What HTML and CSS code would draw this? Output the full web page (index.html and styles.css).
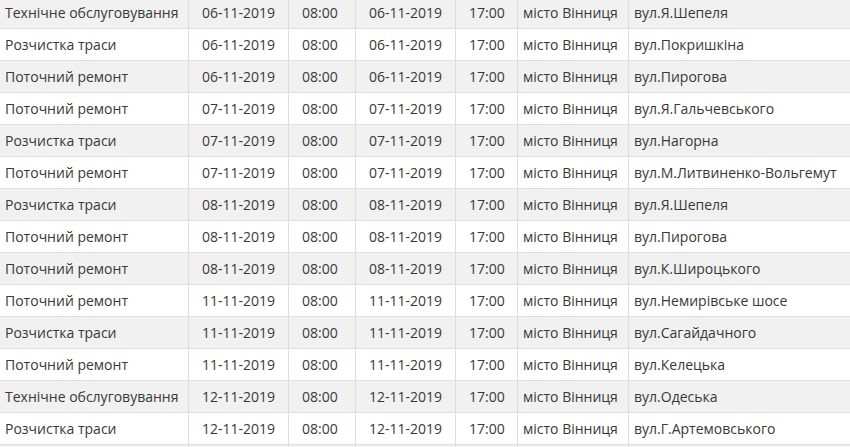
FILE: index.html
```html
<!DOCTYPE html>
<html lang="uk">
<head>
<meta charset="utf-8">
<title>Графік відключень</title>
<link rel="stylesheet" href="styles.css">
</head>
<body>
<div class="wrap">
<table class="schedule">
<colgroup>
<col class="c-type"><col class="c-date1"><col class="c-time1"><col class="c-date2"><col class="c-time2"><col class="c-city"><col class="c-street">
</colgroup>
<tbody>
<tr><td>Технічне обслуговування</td><td class="num">06-11-2019</td><td class="num">08:00</td><td class="num">06-11-2019</td><td class="num">17:00</td><td>місто Вінниця</td><td>вул.Я.Шепеля</td></tr>
<tr><td>Розчистка траси</td><td class="num">06-11-2019</td><td class="num">08:00</td><td class="num">06-11-2019</td><td class="num">17:00</td><td>місто Вінниця</td><td>вул.Покришкіна</td></tr>
<tr><td>Поточний ремонт</td><td class="num">06-11-2019</td><td class="num">08:00</td><td class="num">06-11-2019</td><td class="num">17:00</td><td>місто Вінниця</td><td>вул.Пирогова</td></tr>
<tr><td>Поточний ремонт</td><td class="num">07-11-2019</td><td class="num">08:00</td><td class="num">07-11-2019</td><td class="num">17:00</td><td>місто Вінниця</td><td>вул.Я.Гальчевського</td></tr>
<tr><td>Розчистка траси</td><td class="num">07-11-2019</td><td class="num">08:00</td><td class="num">07-11-2019</td><td class="num">17:00</td><td>місто Вінниця</td><td>вул.Нагорна</td></tr>
<tr><td>Поточний ремонт</td><td class="num">07-11-2019</td><td class="num">08:00</td><td class="num">07-11-2019</td><td class="num">17:00</td><td>місто Вінниця</td><td>вул.М.Литвиненко-Вольгемут</td></tr>
<tr><td>Розчистка траси</td><td class="num">08-11-2019</td><td class="num">08:00</td><td class="num">08-11-2019</td><td class="num">17:00</td><td>місто Вінниця</td><td>вул.Я.Шепеля</td></tr>
<tr><td>Поточний ремонт</td><td class="num">08-11-2019</td><td class="num">08:00</td><td class="num">08-11-2019</td><td class="num">17:00</td><td>місто Вінниця</td><td>вул.Пирогова</td></tr>
<tr><td>Поточний ремонт</td><td class="num">08-11-2019</td><td class="num">08:00</td><td class="num">08-11-2019</td><td class="num">17:00</td><td>місто Вінниця</td><td>вул.К.Широцького</td></tr>
<tr><td>Поточний ремонт</td><td class="num">11-11-2019</td><td class="num">08:00</td><td class="num">11-11-2019</td><td class="num">17:00</td><td>місто Вінниця</td><td>вул.Немирівське шосе</td></tr>
<tr><td>Розчистка траси</td><td class="num">11-11-2019</td><td class="num">08:00</td><td class="num">11-11-2019</td><td class="num">17:00</td><td>місто Вінниця</td><td>вул.Сагайдачного</td></tr>
<tr><td>Поточний ремонт</td><td class="num">11-11-2019</td><td class="num">08:00</td><td class="num">11-11-2019</td><td class="num">17:00</td><td>місто Вінниця</td><td>вул.Келецька</td></tr>
<tr><td>Технічне обслуговування</td><td class="num">12-11-2019</td><td class="num">08:00</td><td class="num">12-11-2019</td><td class="num">17:00</td><td>місто Вінниця</td><td>вул.Одеська</td></tr>
<tr><td>Розчистка траси</td><td class="num">12-11-2019</td><td class="num">08:00</td><td class="num">12-11-2019</td><td class="num">17:00</td><td>місто Вінниця</td><td>вул.Г.Артемовського</td></tr>
<tr><td></td><td></td><td></td><td></td><td></td><td></td><td></td></tr>
</tbody>
</table>
</div>
</body>
</html>
```

FILE: styles.css
```css
html, body {
  margin: 0;
  padding: 0;
  background: #ffffff;
}

.wrap {
  width: 850px;
  height: 447px;
  overflow: hidden;
}

.schedule {
  border-collapse: collapse;
  table-layout: fixed;
  width: 1000px;
  margin: -4px 0 0 -1px;
  font-family: "Open Sans", "Noto Sans", sans-serif;
  font-size: 14px;
  color: #383838;
}

.c-type { width: 189px; }
.c-date1 { width: 100px; }
.c-time1 { width: 67px; }
.c-date2 { width: 100px; }
.c-time2 { width: 62px; }
.c-city { width: 111px; }
.c-street { width: 371px; }

.schedule td {
  border: 1px solid #dedede;
  height: 32px;
  padding: 0 5px;
  line-height: 19px;
  white-space: nowrap;
  vertical-align: middle;
  box-sizing: border-box;
}

.schedule td.num {
  padding-left: 13px;
}

.schedule tr:nth-child(odd) td {
  background: #f1f1f1;
}

.schedule tr:nth-child(even) td {
  background: #ffffff;
}
```
